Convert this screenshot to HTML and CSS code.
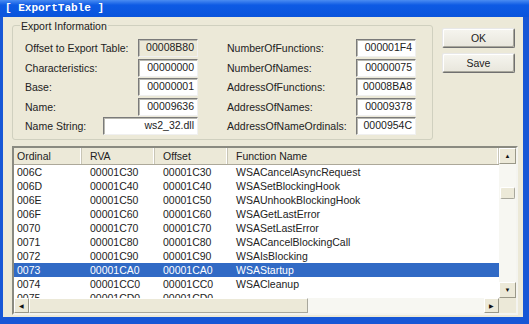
FILE: index.html
```html
<!DOCTYPE html>
<html lang="en">
<head>
    <meta charset="UTF-8">
    <title>ExportTable</title>
    <link rel="stylesheet" href="styles.css">
</head>
<body>
    <div class="window">
        <div class="titlebar">[ ExportTable ]</div>
        <div class="client">
            <div class="top">
                <!-- Export Information -->
                <div class="group">
                    <span class="legend">Export Information</span>
                    <div class="fields">
                        <span class="lbl">Offset to Export Table:</span><span class="box ro">00008B80</span>
                        <span class="lbl r">NumberOfFunctions:</span><span class="box r">000001F4</span>

                        <span class="lbl">Characteristics:</span><span class="box">00000000</span>
                        <span class="lbl r">NumberOfNames:</span><span class="box r">00000075</span>

                        <span class="lbl">Base:</span><span class="box">00000001</span>
                        <span class="lbl r">AddressOfFunctions:</span><span class="box r">00008BA8</span>

                        <span class="lbl">Name:</span><span class="box">00009636</span>
                        <span class="lbl r">AddressOfNames:</span><span class="box r">00009378</span>

                        <span class="lbl short">Name String:</span><span class="box wide">ws2_32.dll</span>
                        <span class="lbl r">AddressOfNameOrdinals:</span><span class="box r">0000954C</span>
                    </div>
                </div>

                <div class="buttons">
                    <button>OK</button>
                    <button>Save</button>
                </div>
            </div>

            <!-- Lista de funciones -->
            <div class="list">
                <div class="main">
                    <div class="row head">
                        <span>Ordinal</span><span>RVA</span><span>Offset</span><span>Function Name</span>
                    </div>
                    <div class="row"><span>006C</span><span>00001C30</span><span>00001C30</span><span>WSACancelAsyncRequest</span></div>
                    <div class="row"><span>006D</span><span>00001C40</span><span>00001C40</span><span>WSASetBlockingHook</span></div>
                    <div class="row"><span>006E</span><span>00001C50</span><span>00001C50</span><span>WSAUnhookBlockingHook</span></div>
                    <div class="row"><span>006F</span><span>00001C60</span><span>00001C60</span><span>WSAGetLastError</span></div>
                    <div class="row"><span>0070</span><span>00001C70</span><span>00001C70</span><span>WSASetLastError</span></div>
                    <div class="row"><span>0071</span><span>00001C80</span><span>00001C80</span><span>WSACancelBlockingCall</span></div>
                    <div class="row"><span>0072</span><span>00001C90</span><span>00001C90</span><span>WSAIsBlocking</span></div>
                    <div class="row sel"><span>0073</span><span>00001CA0</span><span>00001CA0</span><span>WSAStartup</span></div>
                    <div class="row"><span>0074</span><span>00001CC0</span><span>00001CC0</span><span>WSACleanup</span></div>
                    <div class="row"><span>0075</span><span>00001CD0</span><span>00001CD0</span><span>-</span></div>
                </div>
                <div class="vscroll">
                    <div class="arrow">&#9650;</div>
                    <div class="track"><div class="thumb"></div></div>
                    <div class="arrow">&#9660;</div>
                </div>
                <div class="hscroll">
                    <div class="arrow">&#9664;</div>
                    <div class="hthumb"></div>
                    <div class="htrack"></div>
                    <div class="arrow">&#9654;</div>
                </div>
                <div class="corner"></div>
            </div>
        </div>
    </div>
</body>
</html>
```

FILE: styles.css
```css
body {
    margin: 0;
    font-family: "Liberation Sans", Arial, sans-serif;
    font-size: 10.5px;
    color: #222;
}
.window {
    width: 529px;
    height: 324px;
    background: #1757d6;
    display: flex;
    flex-direction: column;
}
.titlebar {
    height: 17px;
    line-height: 17px;
    padding-left: 5px;
    background: linear-gradient(#4a8cf2, #0d5ae4 30%, #0a54dc);
    color: #fff;
    font-family: "Liberation Mono", "Courier New", monospace;
    font-weight: bold;
    font-size: 11px;
}
.client {
    flex: 1;
    margin: 0 6px 7px 3px;
    background: #ece9d8;
}
.top {
    display: flex;
}
.group {
    margin: 8px 0 0 9px;
    width: 419px;
    height: 113px;
    border: 1px solid #d0d0bf;
    border-radius: 3px;
}
.legend {
    display: table;
    margin: -6px 0 0 7px;
    padding: 0 1px;
    line-height: 13px;
    background: #ece9d8;
}
.fields {
    display: grid;
    grid-template-columns: 78px 35px 60px 29px 129px 60px;
    grid-template-rows: repeat(5, 18px);
    row-gap: 1.5px;
    margin: 6px 0 0 12px;
    align-items: center;
}
.lbl {
    grid-column: 1 / 3;
    white-space: nowrap;
}
.lbl.short {
    grid-column: 1;
}
.lbl.r {
    grid-column: 5;
}
.box {
    grid-column: 3;
    height: 18px;
    box-sizing: border-box;
    line-height: 15px;
    text-align: right;
    padding-right: 3px;
    background: #fff;
    border: 1px solid;
    border-color: #7a7a7a #f0f0f0 #f0f0f0 #7a7a7a;
    box-shadow: inset 1px 1px #b8b8b0;
}
.box.ro {
    background: #ece9d8;
}
.box.wide {
    grid-column: 2 / 4;
}
.box.r {
    grid-column: 6;
}
.buttons {
    display: flex;
    flex-direction: column;
    gap: 5px;
    margin: 11px 0 0 9px;
}
.buttons button {
    width: 73px;
    height: 20px;
    padding: 0;
    font-family: inherit;
    font-size: 10.5px;
    color: #222;
    background: linear-gradient(#f6f5ef, #e8e6dc);
    border: 1px solid;
    border-color: #e8e8e8 #707070 #707070 #e8e8e8;
    box-shadow: inset -1px -1px #a8a79c, inset 1px 1px #fff;
    border-radius: 2px;
}
.list {
    margin: 6px 0 0 9px;
    width: 506px;
    height: 169px;
    box-sizing: border-box;
    border: 2px solid;
    border-color: #8a8a80 #f4f4f0 #f4f4f0 #8a8a80;
    background: #fff;
    display: grid;
    grid-template-columns: 485px 17px;
    grid-template-rows: 150px 15px;
}
.main {
    overflow: hidden;
}
.row {
    display: grid;
    grid-template-columns: 68px 73px 73px 1fr;
    height: 14px;
    line-height: 14px;
    white-space: nowrap;
}
.row span {
    padding-left: 8px;
}
.row span:first-child {
    padding-left: 3px;
}
.row.head {
    height: 17px;
    line-height: 16px;
    background: #ece9d8;
    box-sizing: border-box;
    border-bottom: 1px solid #aca899;
}
.row.head span {
    border-right: 1px solid #c8c5b6;
    box-shadow: inset -1px 0 #fff;
}
.row.head span:first-child {
    padding-left: 3px;
}
.row.sel {
    background: #316ac5;
    color: #fff;
}
.vscroll {
    display: flex;
    flex-direction: column;
    background: #f7f7f2;
}
.arrow {
    height: 16px;
    width: 100%;
    box-sizing: border-box;
    background: #ece9d8;
    border: 1px solid;
    border-color: #fff #9a9888 #9a9888 #fff;
    font-size: 6px;
    line-height: 14px;
    text-align: center;
    color: #111;
}
.track {
    flex: 1;
}
.thumb {
    margin: 23px 1px 0 1px;
    height: 10px;
    background: #ece9d8;
    border: 1px solid;
    border-color: #fff #a8a79c #a8a79c #fff;
    border-radius: 2px;
}
.hscroll {
    display: flex;
    background: #f7f7f2;
}
.hscroll .arrow {
    width: 15px;
    height: 15px;
}
.hthumb {
    width: 279px;
    box-sizing: border-box;
    background: #ece9d8;
    border: 1px solid;
    border-color: #fff #a8a79c #a8a79c #fff;
}
.htrack {
    flex: 1;
}
.corner {
    background: #ece9d8;
}
```
